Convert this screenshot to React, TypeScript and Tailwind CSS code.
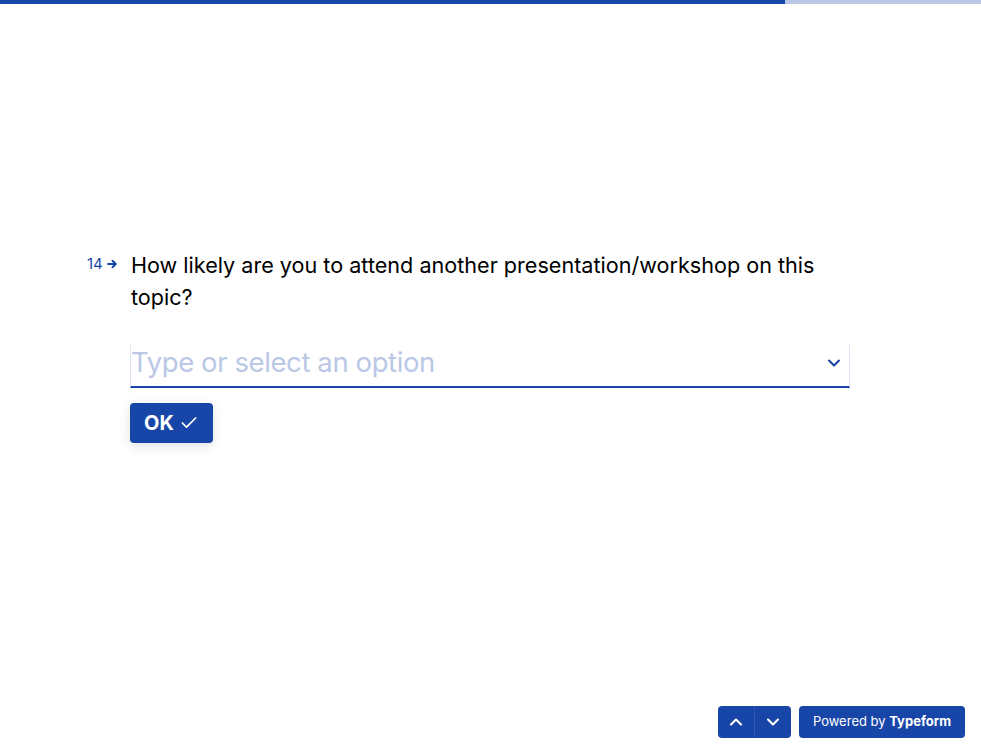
import { ChevronDown, ChevronUp, Check } from 'lucide-react';

export default function App() {
  return (
    <div className="relative w-[981px] h-[754px] bg-white overflow-hidden font-['Inter',sans-serif]">
      {/* progress */}
      <div className="flex h-1 w-full">
        <div className="w-[785px] bg-[#1846a8]" />
        <div className="flex-1 bg-[#bac8e6]" />
      </div>

      <div className="flex pt-[245px] pl-[87px]">
        <div className="flex items-center h-[30px] gap-[4px] text-[15px] text-[#1846a8] w-[44px]">
          <span>14</span>
          <svg width="11" height="10" viewBox="0 0 11 10" fill="none">
            <path d="M1 5h7.5M5.5 1.8L8.8 5 5.5 8.2" stroke="#1846a8" strokeWidth="2" strokeLinecap="round" strokeLinejoin="round" />
          </svg>
        </div>
        <div className="w-[720px] -ml-px">
          <h1 className="text-[21.6px] leading-[32px] text-black pl-px">
            How likely are you to attend another presentation/workshop on this topic?
          </h1>

          <div className="mt-[32px] flex items-center h-[43px] border-l border-r border-[#dde4f3] border-b-2 border-b-[#1846a8]">
            <span className="flex-1 text-[27.5px] tracking-[-0.4px] text-[#bac8e6] mb-[5px]">
              Type or select an option
            </span>
            <ChevronDown className="w-5 h-5 mr-[5px] mb-[6px] text-[#1846a8]" strokeWidth={2.5} />
          </div>

          <button className="mt-[15px] flex items-center gap-[5px] h-[40px] px-[14px] rounded bg-[#1846a8] text-white text-[20px] font-bold shadow-[0_3px_12px_rgba(0,0,0,0.12)]">
            OK
            <Check className="w-5 h-5" strokeWidth={2} />
          </button>
        </div>
      </div>

      <div className="absolute bottom-4 right-4 flex gap-2">
        <div className="flex h-8 rounded bg-[#1846a8] overflow-hidden">
          <button className="w-[37px] flex items-center justify-center border-r border-[#2e58b3]">
            <ChevronUp className="w-5 h-5 text-white" strokeWidth={2.5} />
          </button>
          <button className="w-9 flex items-center justify-center">
            <ChevronDown className="w-5 h-5 text-white" strokeWidth={2.5} />
          </button>
        </div>
        <button className="h-8 px-[14px] rounded bg-[#1846a8] text-white text-[13px]">
          Powered by <span className="font-bold">Typeform</span>
        </button>
      </div>
    </div>
  );
}
